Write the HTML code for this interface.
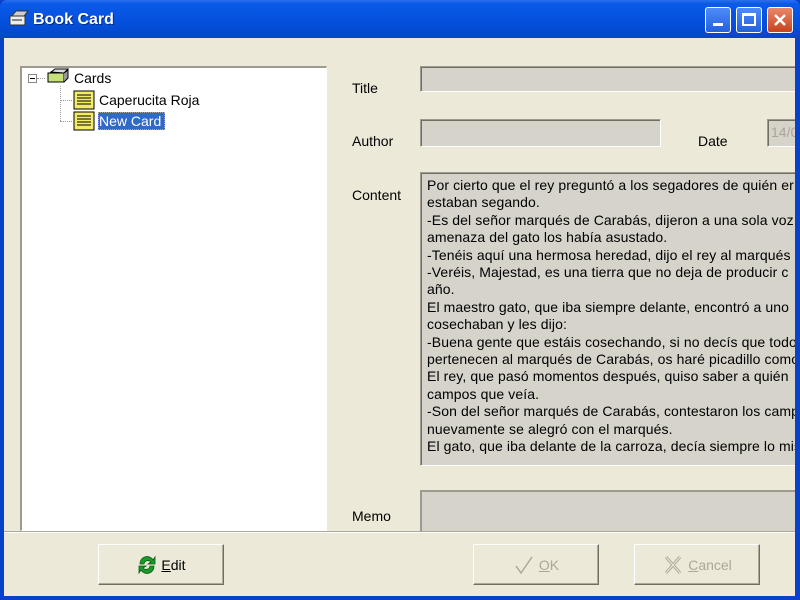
<!DOCTYPE html>
<html><head><meta charset="utf-8"><style>
*{margin:0;padding:0;box-sizing:border-box}
body{width:800px;height:600px;overflow:hidden;background:#0842c8;font-family:"Liberation Sans",sans-serif;font-size:13px;color:#000;position:relative}
.tb{position:absolute;left:0;top:0;width:800px;height:38px;background:linear-gradient(#2a6ff0 0,#0a5ae8 10%,#0450dc 60%,#0446c8 100%);border-radius:7px 7px 0 0}
.title{position:absolute;left:33px;top:11px;color:#fff;font-weight:bold;font-size:16px;text-shadow:1px 1px #0a2a80}
.client{position:absolute;left:4px;top:38px;width:791px;height:558px;background:#ece9d8;overflow:hidden}
.abs{position:absolute}
.lbl{position:absolute;font-size:14px}
.inp{position:absolute;background:#d6d3ca;border:1px solid #fff;border-top-color:#9d9a8f;border-left-color:#9d9a8f;box-shadow:inset 1px 1px #716f64}
.btn{position:absolute;width:126px;height:41px;border:1px solid #fff;border-right-color:#716f64;border-bottom-color:#716f64;box-shadow:inset -1px -1px #aca899;background:#ece9d8;display:flex;align-items:center;justify-content:center;font-size:14px}
.wb{position:absolute;top:7px;width:26px;height:26px;border:1px solid #fff;border-radius:3px;background:linear-gradient(#4f8cf7,#2260e0)}
</style></head><body>
<div class="tb">
<svg class="abs" style="left:8px;top:10px" width="22" height="18"><path d="M4 6 L8 1 H20 L16 6Z" fill="#d0d0d0" stroke="#333"/><rect x="2" y="6" width="15" height="9" fill="#eee" stroke="#333"/><rect x="4" y="9" width="10" height="2" fill="#888"/></svg>
<div class="title">Book Card</div>
<div class="wb" style="left:705px"><div class="abs" style="left:7px;top:15px;width:10px;height:3px;background:#fff"></div></div>
<div class="wb" style="left:736px"><div class="abs" style="left:5px;top:5px;width:14px;height:13px;border:2px solid #fff;border-top-width:3px"></div></div>
<div class="wb" style="left:767px;background:linear-gradient(#e8886a,#c9421c)"><svg class="abs" style="left:5px;top:5px" width="14" height="14"><path d="M2 2L12 12M12 2L2 12" stroke="#fff" stroke-width="2.5"/></svg></div>
</div>
<div class="client">
<div class="abs" style="left:16px;top:28px;width:307px;height:465px;background:#fff;border:1px solid #fff;border-top:2px solid #9d9a8f;border-left:2px solid #9d9a8f"></div>
<div class="abs" style="left:24px;top:36px;width:9px;height:9px;border:1px solid #888;background:#fff"><div class="abs" style="left:1px;top:3px;width:5px;height:1px;background:#000"></div></div>
<div class="abs" style="left:33px;top:40px;width:8px;border-top:1px dotted #999"></div>
<div class="abs" style="left:56px;top:48px;height:35px;border-left:1px dotted #999"></div>
<div class="abs" style="left:56px;top:62px;width:12px;border-top:1px dotted #999"></div>
<div class="abs" style="left:56px;top:83px;width:12px;border-top:1px dotted #999"></div>
<svg class="abs" style="left:42px;top:30px" width="24" height="16"><path d="M5 4L9 1H22L18 5Z" fill="#ddd" stroke="#000"/><rect x="2" y="5" width="16" height="9" fill="#c8e07a" stroke="#000"/><path d="M18 5L22 2V10L18 14" fill="#999" stroke="#000"/></svg>
<div class="lbl" style="left:70px;top:32px">Cards</div>
<svg class="abs" style="left:69px;top:52px" width="22" height="20"><rect x="1" y="1" width="20" height="18" fill="#f2ec6a" stroke="#000"/><path d="M4 5H18M4 8H18M4 11H18M4 14H18" stroke="#000"/></svg>
<div class="lbl" style="left:95px;top:54px">Caperucita Roja</div>
<svg class="abs" style="left:69px;top:73px" width="22" height="20"><rect x="1" y="1" width="20" height="18" fill="#f2ec6a" stroke="#000"/><path d="M4 5H18M4 8H18M4 11H18M4 14H18" stroke="#000"/></svg>
<div class="abs" style="left:94px;top:74px;width:67px;height:18px;background:#316ac5;border:1px dotted #aaa"></div>
<div class="lbl" style="left:95px;top:75px;color:#fff">New Card</div>

<div class="lbl" style="left:348px;top:42px">Title</div>
<div class="inp" style="left:416px;top:28px;width:380px;height:26px"></div>
<div class="lbl" style="left:348px;top:95px">Author</div>
<div class="inp" style="left:416px;top:81px;width:241px;height:28px"></div>
<div class="lbl" style="left:694px;top:95px">Date</div>
<div class="inp" style="left:763px;top:81px;width:40px;height:28px;color:#a8a59c;padding:4px 0 0 3px;font-size:14px">14/0</div>
<div class="lbl" style="left:348px;top:149px">Content</div>
<div class="inp" style="left:416px;top:134px;width:380px;height:294px;padding:4px 0 0 6px;line-height:17.4px;white-space:nowrap;overflow:hidden;font-size:14px;letter-spacing:0.1px">Por cierto que el rey preguntó a los segadores de quién er<br>estaban segando.<br>-Es del señor marqués de Carabás, dijeron a una sola voz<br>amenaza del gato los había asustado.<br>-Tenéis aquí una hermosa heredad, dijo el rey al marqués<br>-Veréis, Majestad, es una tierra que no deja de producir c<br>año.<br>El maestro gato, que iba siempre delante, encontró a uno<br>cosechaban y les dijo:<br>-Buena gente que estáis cosechando, si no decís que todo<br>pertenecen al marqués de Carabás, os haré picadillo como<br>El rey, que pasó momentos después, quiso saber a quién<br>campos que veía.<br>-Son del señor marqués de Carabás, contestaron los camp<br>nuevamente se alegró con el marqués.<br>El gato, que iba delante de la carroza, decía siempre lo mis</div>
<div class="abs" style="left:416px;top:452px;width:380px;height:42px;background:#d6d3ca;border-top:2px solid #9d9a8f;border-left:2px solid #9d9a8f"></div>
<div class="lbl" style="left:348px;top:470px">Memo</div>
<div class="abs" style="left:0;top:493px;width:791px;height:1px;background:#aca899"></div>
<div class="abs" style="left:0;top:494px;width:791px;height:1px;background:#fff"></div>
<div class="btn" style="left:94px;top:506px"><svg width="22" height="22" style="margin-right:3px"><path d="M4 10A7 7 0 0 1 17 6L19 3V10H12L15 8A4 4 0 0 0 8 10Z M18 12A7 7 0 0 1 5 16L3 19V12H10L7 14A4 4 0 0 0 14 12Z" fill="#1a9a2a" stroke="#0a5a12" stroke-width=".8"/></svg><u>E</u>dit</div>
<div class="btn" style="left:469px;top:506px;color:#aca899"><svg width="22" height="22" style="margin-right:4px"><path d="M3 12L8 19L19 3" fill="none" stroke="#aca899" stroke-width="1.5"/></svg><u>O</u>K</div>
<div class="btn" style="left:630px;top:506px;color:#aca899"><svg width="22" height="22" style="margin-right:4px"><path d="M4 3L18 19M18 3L4 19" stroke="#aca899" stroke-width="3"/><path d="M4 3L18 19M18 3L4 19" stroke="#ece9d8" stroke-width="1"/></svg><u>C</u>ancel</div>
</div>
</body></html>
